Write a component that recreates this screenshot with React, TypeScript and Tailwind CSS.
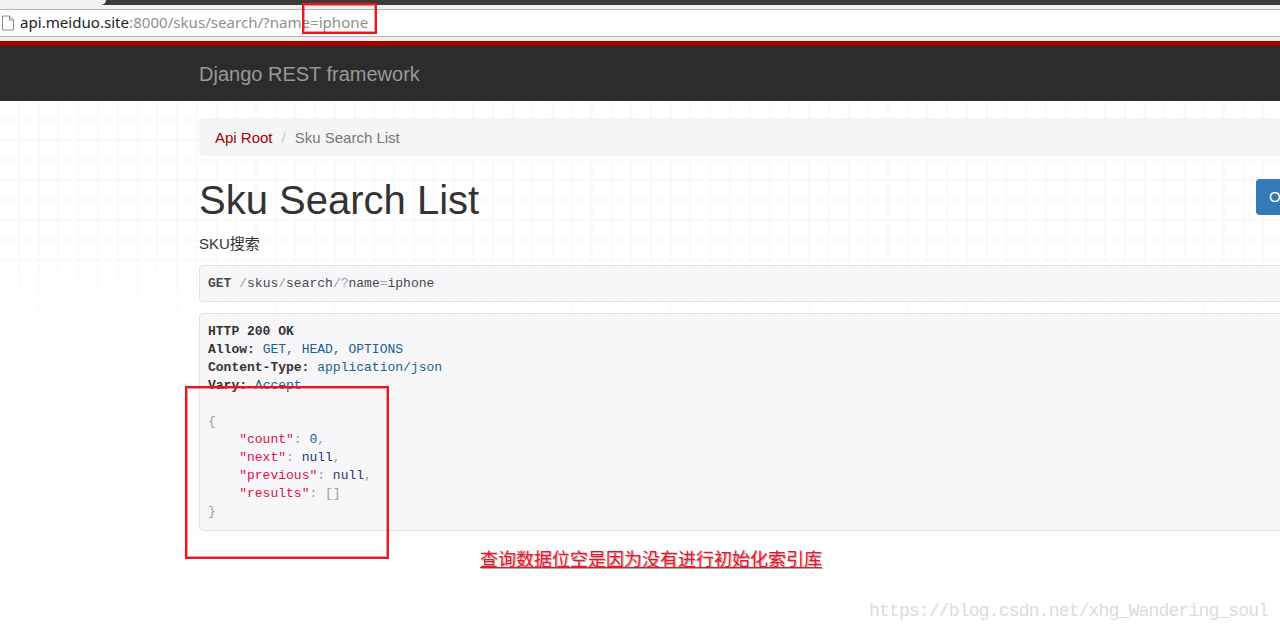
const mono = "font-['Liberation_Mono','Noto_Sans_CJK_SC',monospace]";

function Page() {
  return (
    <svg width="14" height="16" viewBox="0 0 14 16" className="shrink-0">
      <path d="M1.5 1h7l4 4v10h-11z M8.5 1v4h4" fill="#fff" stroke="#8a8a8a" strokeWidth="1" />
    </svg>
  );
}

export default function App() {
  return (
    <div className="relative h-[631px] w-[1280px] overflow-hidden bg-white font-['Liberation_Sans','Noto_Sans_CJK_SC',sans-serif]">
      <div className="flex h-[5px] bg-[#3c3b37]">
        <div className="w-[106px] rounded-br-[6px] bg-[#f2f1f0]" />
      </div>
      <div className="h-[4px] bg-[#f2f1f0]" />
      <div className="flex h-[28px] items-center border-y border-[#b5b5b5] bg-white pl-[1px]">
        <Page />
        <div className="ml-[5px] font-['Noto_Sans',sans-serif] text-[15.1px] leading-none text-[#8f8f8f]">
          <span className="text-[#222]">api.meiduo.site</span>:8000/skus/search/?name=iphone
        </div>
      </div>
      <div className="h-[4px] bg-[#f2f1f0]" />
      <div className="h-[5px] bg-[#a30000]" />
      <div className="flex h-[55px] items-center bg-[#2c2c2c] pl-[199px] pt-[1px]">
        <span className="text-[20px] leading-none text-[#999]">Django REST framework</span>
      </div>
      <div className="relative flex-1">
        <div className="absolute left-0 top-0 h-[255px] w-[1280px] bg-[linear-gradient(#f9f9f9_2px,transparent_2px),linear-gradient(90deg,#f9f9f9_2px,transparent_2px)] bg-[size:19.75px_20px] bg-[position:18px_18px] [mask-image:linear-gradient(#000_55%,transparent)]" />
        <div className="relative ml-[199px] pt-[17px]">
          <div className="flex h-[38px] w-[1100px] items-center rounded-l-[4px] bg-[#f5f5f5] pl-[16px] text-[15px] leading-none">
            <span className="text-[#a30000]">Api Root</span>
            <span className="mx-[9px] text-[#ccc]">/</span>
            <span className="text-[#777]">Sku Search List</span>
          </div>
          <div className="relative">
            <h1 className="pt-[21px] text-[40px] leading-[46px] text-[#333]">Sku Search List</h1>
            <div className="absolute left-[1057px] top-[23px] flex h-[36px] w-[40px] items-center rounded-l-[4px] bg-[#337ab7] pl-[13px] text-[15px] text-white">O</div>
          </div>
          <p className="mt-[10px] text-[15px] leading-[21px] text-[#333]">SKU搜索</p>
          <div className={`${mono} mt-[11px] h-[37px] w-[1100px] rounded-l-[4px] border border-[#e1e1e8] bg-[#f7f7f9] py-[9px] pl-[8px] text-[13px] leading-[18px] text-[#48484c]`}>
            <b>GET</b> <span className="text-[#93a1a1]">/</span>skus<span className="text-[#93a1a1]">/</span>search<span className="text-[#93a1a1]">/?</span>name<span className="text-[#93a1a1]">=</span>iphone
          </div>
          <div className={`${mono} mt-[11px] h-[218px] w-[1100px] rounded-l-[4px] border border-[#e1e1e8] bg-[#f7f7f9] py-[9px] pl-[8px] text-[13px] leading-[18px] text-[#333] whitespace-pre`}>
            <div><b>HTTP 200 OK</b></div>
            <div><b>Allow:</b> <span className="text-[#195f91]">GET, HEAD, OPTIONS</span></div>
            <div><b>Content-Type:</b> <span className="text-[#195f91]">application/json</span></div>
            <div><b>Vary:</b> <span className="text-[#195f91]">Accept</span></div>
            <div>&nbsp;</div>
            <div className="text-[#93a1a1]">{"{"}</div>
            <div className="text-[#93a1a1]">{"    "}<span className="text-[#dd1144]">"count"</span>: <span className="text-[#195f91]">0</span>,</div>
            <div className="text-[#93a1a1]">{"    "}<span className="text-[#dd1144]">"next"</span>: <span className="text-[#1e347b]">null</span>,</div>
            <div className="text-[#93a1a1]">{"    "}<span className="text-[#dd1144]">"previous"</span>: <span className="text-[#1e347b]">null</span>,</div>
            <div className="text-[#93a1a1]">{"    "}<span className="text-[#dd1144]">"results"</span>: []</div>
            <div className="text-[#93a1a1]">{"}"}</div>
          </div>
        </div>
      </div>

      <div className="absolute left-[302px] top-[3px] h-[31px] w-[75px] border-2 border-[#f0141e] shadow-[inset_0_0_0_1px_rgba(240,20,30,0.45)]" />
      <div className="absolute left-[185px] top-[386px] h-[173px] w-[204px] border-2 border-[#f0141e] shadow-[inset_0_0_0_1px_rgba(240,20,30,0.45)]" />
      <div className="absolute left-[480px] top-[549px] text-[18px] leading-[22px] text-[#f5112a] underline decoration-[#f5112a] [text-shadow:1px_1px_1px_#aaa]">查询数据位空是因为没有进行初始化索引库</div>
      <div className="absolute left-[869px] top-[600px] font-['Liberation_Mono',monospace] text-[18px] leading-[22px] tracking-[-0.82px] text-[#dcdcd6]">https://blog.csdn.net/xhg_Wandering_soul</div>
    </div>
  );
}
